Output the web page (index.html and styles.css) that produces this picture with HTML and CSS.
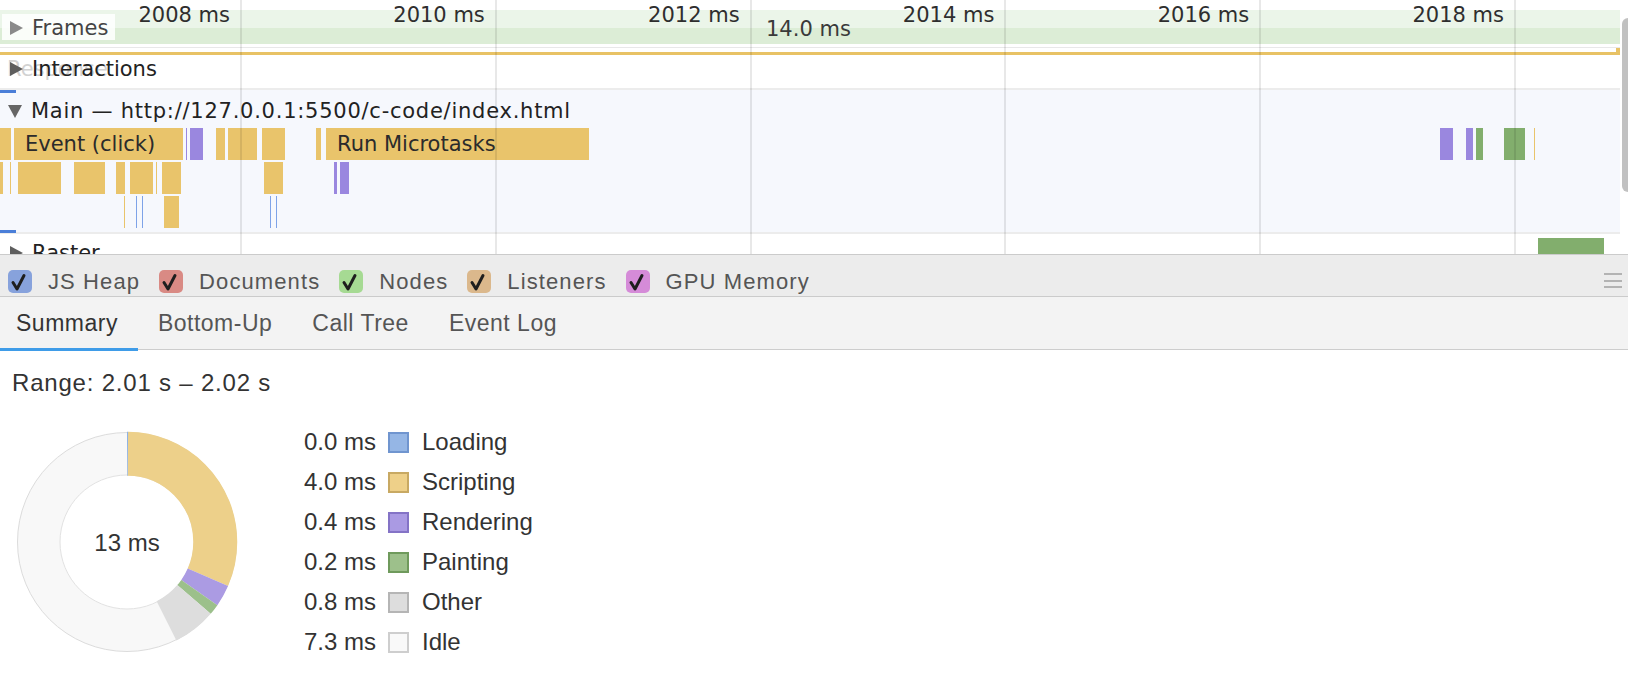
FILE: index.html
```html
<!DOCTYPE html>
<html lang="en">
<head>
<meta charset="utf-8">
<title>Performance</title>
<link rel="stylesheet" href="styles.css">
</head>
<body>
<div class="timeline">
  <div class="tracks">
    <div class="frames">
      <div class="band"><div class="band-top"></div><div class="band-bottom"></div></div>
      <div class="frame-dur">14.0 ms</div>
      <div class="frames-label"><span class="tri-right light"></span>Frames</div>
    </div>
    <div class="busy"><span class="busy-tick"></span></div>
    <div class="interactions">
      <span class="ghost">Response</span>
      <div class="track-title"><span class="tri-right"></span>Interactions</div>
    </div>
    <div class="main">
      <div class="main-title"><span class="tri-down"></span>Main — http://127.0.0.1:5500/c-code/index.html</div>
      <div class="bar-row">
        <div class="bar y" style="left:0;width:11px"></div>
        <div class="bar y" style="left:14px;width:169px"><span class="bar-text">Event (click)</span></div>
        <div class="bar p" style="left:186px;width:1px"></div>
        <div class="bar p" style="left:190px;width:13px"></div>
        <div class="bar y" style="left:216px;width:9px"></div>
        <div class="bar y" style="left:228px;width:29px"></div>
        <div class="bar y" style="left:262px;width:23px"></div>
        <div class="bar y" style="left:316px;width:5px"></div>
        <div class="bar y" style="left:326px;width:263px"><span class="bar-text">Run Microtasks</span></div>
        <div class="bar p" style="left:1440px;width:13px"></div>
        <div class="bar p" style="left:1466px;width:7px"></div>
        <div class="bar g" style="left:1476px;width:7px"></div>
        <div class="bar g" style="left:1504px;width:21px"></div>
        <div class="bar y" style="left:1534px;width:1px"></div>
      </div>
      <div class="bar-row">
        <div class="bar y" style="left:0;width:3px"></div>
        <div class="bar y" style="left:10px;width:1px"></div>
        <div class="bar y" style="left:18px;width:43px"></div>
        <div class="bar y" style="left:74px;width:31px"></div>
        <div class="bar y" style="left:116px;width:9px"></div>
        <div class="bar y" style="left:130px;width:23px"></div>
        <div class="bar y" style="left:156px;width:1px"></div>
        <div class="bar y" style="left:162px;width:19px"></div>
        <div class="bar y" style="left:264px;width:19px"></div>
        <div class="bar p" style="left:334px;width:3px"></div>
        <div class="bar p" style="left:340px;width:9px"></div>
      </div>
      <div class="bar-row last">
        <div class="bar y" style="left:124px;width:1px"></div>
        <div class="bar b" style="left:136px;width:1px"></div>
        <div class="bar b" style="left:142px;width:1px"></div>
        <div class="bar y" style="left:164px;width:15px"></div>
        <div class="bar b" style="left:270px;width:1px"></div>
        <div class="bar b" style="left:276px;width:1px"></div>
      </div>
    </div>
    <div class="raster">
      <div class="track-title raster-title"><span class="tri-right"></span>Raster</div>
      <div class="bar g raster-bar" style="left:1538px;width:66px"></div>
    </div>
  </div>

  <div class="grid-line" style="left:240px"></div>
  <div class="grid-line" style="left:494.8px"></div>
  <div class="grid-line" style="left:749.6px"></div>
  <div class="grid-line" style="left:1004.4px"></div>
  <div class="grid-line" style="left:1259.2px"></div>
  <div class="grid-line" style="left:1514px"></div>

  <div class="tick" style="left:230px">2008 ms</div>
  <div class="tick" style="left:484.8px">2010 ms</div>
  <div class="tick" style="left:739.6px">2012 ms</div>
  <div class="tick" style="left:994.4px">2014 ms</div>
  <div class="tick" style="left:1249.2px">2016 ms</div>
  <div class="tick" style="left:1504px">2018 ms</div>

  <div class="marker marker-top"></div>
  <div class="marker marker-bottom"></div>
  <div class="scroll-thumb"></div>
</div>

<div class="counters">
  <label class="counter"><span class="cb cb-heap"><svg viewBox="0 0 24 23" width="24" height="23"><polyline points="5,12.5 9,19 16,5.5" /></svg></span>JS Heap</label>
  <label class="counter"><span class="cb cb-docs"><svg viewBox="0 0 24 23" width="24" height="23"><polyline points="5,12.5 9,19 16,5.5" /></svg></span>Documents</label>
  <label class="counter"><span class="cb cb-nodes"><svg viewBox="0 0 24 23" width="24" height="23"><polyline points="5,12.5 9,19 16,5.5" /></svg></span>Nodes</label>
  <label class="counter"><span class="cb cb-list"><svg viewBox="0 0 24 23" width="24" height="23"><polyline points="5,12.5 9,19 16,5.5" /></svg></span>Listeners</label>
  <label class="counter"><span class="cb cb-gpu"><svg viewBox="0 0 24 23" width="24" height="23"><polyline points="5,12.5 9,19 16,5.5" /></svg></span>GPU Memory</label>
  <span class="menu"><i></i><i></i><i></i></span>
</div>

<div class="tabs">
  <div class="tab selected">Summary</div>
  <div class="tab">Bottom-Up</div>
  <div class="tab">Call Tree</div>
  <div class="tab">Event Log</div>
</div>

<div class="summary">
  <div class="range">Range: 2.01 s – 2.02 s</div>
  <div class="chart-row">
    <svg class="pie" width="230" height="230" viewBox="0 0 230 230">
      <circle cx="115" cy="115" r="88.25" fill="none" stroke="#f8f8f8" stroke-width="42.5"/>
      <circle cx="115" cy="115" r="109.5" fill="none" stroke="#dcdcdc" stroke-width="1"/>
      <circle cx="115" cy="115" r="67" fill="none" stroke="#e2e2e2" stroke-width="1"/>
      <g transform="rotate(-90 115 115)" fill="none" stroke-width="44">
        <circle cx="115" cy="115" r="88.25" stroke="#edd08a" stroke-dasharray="173.9 600" stroke-dashoffset="-0.8"/>
        <circle cx="115" cy="115" r="88.25" stroke="#ab9be3" stroke-dasharray="17.47 600" stroke-dashoffset="-174.67"/>
        <circle cx="115" cy="115" r="88.25" stroke="#9cc08b" stroke-dasharray="8.73 600" stroke-dashoffset="-192.14"/>
        <circle cx="115" cy="115" r="88.25" stroke="#dddddd" stroke-dasharray="34.93 600" stroke-dashoffset="-200.87"/>
        <circle cx="115" cy="115" r="88.25" stroke="#8fb2e4" stroke-dasharray="0.9 600" stroke-dashoffset="0"/>
      </g>
      <text x="115" y="123.5" text-anchor="middle" class="pie-total">13 ms</text>
    </svg>
    <div class="legend">
      <div class="legend-row"><span class="val">0.0 ms</span><span class="sw sw-loading"></span><span class="lbl">Loading</span></div>
      <div class="legend-row"><span class="val">4.0 ms</span><span class="sw sw-scripting"></span><span class="lbl">Scripting</span></div>
      <div class="legend-row"><span class="val">0.4 ms</span><span class="sw sw-rendering"></span><span class="lbl">Rendering</span></div>
      <div class="legend-row"><span class="val">0.2 ms</span><span class="sw sw-painting"></span><span class="lbl">Painting</span></div>
      <div class="legend-row"><span class="val">0.8 ms</span><span class="sw sw-other"></span><span class="lbl">Other</span></div>
      <div class="legend-row"><span class="val">7.3 ms</span><span class="sw sw-idle"></span><span class="lbl">Idle</span></div>
    </div>
  </div>
</div>
</body>
</html>
```

FILE: styles.css
```css
html, body {
  margin: 0;
  padding: 0;
}
body {
  width: 1628px;
  height: 674px;
  overflow: hidden;
  background: #ffffff;
  font-family: "Liberation Sans", Arial, sans-serif;
  color: #333;
}

/* ---------- timeline ---------- */
.timeline {
  position: relative;
  height: 254px;
  overflow: hidden;
  font-family: "DejaVu Sans", "Liberation Sans", sans-serif;
  font-size: 21px;
  color: #222;
}
.tracks {
  width: 1620px;
}
.frames {
  position: relative;
  height: 47px;
  border-bottom: 1px solid #e8e8e8;
  margin-bottom: 4px;
}
.band {
  position: absolute;
  left: 0;
  right: 0;
  top: 10px;
  height: 34px;
  display: flex;
  flex-direction: column;
}
.band-top {
  height: 18px;
  background: #ebf5e9;
}
.band-bottom {
  flex: 1;
  background: #dcedd6;
}
.frame-dur {
  position: absolute;
  left: 766px;
  top: 17px;
  line-height: 24px;
  color: #3a3a3a;
}
.frames-label {
  position: absolute;
  left: 2px;
  top: 14px;
  width: 113px;
  height: 26px;
  box-sizing: border-box;
  padding: 1px 0 0 8px;
  line-height: 24px;
  background: rgba(255, 255, 255, 0.85);
  display: flex;
  align-items: center;
  color: #444;
}
.tri-right {
  display: inline-block;
  width: 0;
  height: 0;
  border-top: 7px solid transparent;
  border-bottom: 7px solid transparent;
  border-left: 13px solid #5e5e5e;
  margin-right: 9px;
  flex: none;
}
.tri-right.light {
  border-left-color: #8a8a8a;
}
.tri-down {
  display: inline-block;
  width: 0;
  height: 0;
  border-left: 7.5px solid transparent;
  border-right: 7.5px solid transparent;
  border-top: 13px solid #666;
  margin-right: 9px;
  flex: none;
}
.busy {
  position: relative;
  height: 3px;
  background: #e8c265;
}
.busy-tick {
  position: absolute;
  right: 0;
  bottom: 0;
  width: 4px;
  height: 7px;
  background: #e8c265;
}
.interactions {
  position: relative;
  height: 33px;
  border-bottom: 2px solid #ececec;
}
.track-title {
  position: relative;
  display: flex;
  align-items: center;
  padding: 2px 0 0 10px;
  line-height: 24px;
}
.ghost {
  position: absolute;
  left: 7px;
  top: 2px;
  line-height: 24px;
  color: #d2d2d2;
}
.main {
  background: #f6f8fd;
  padding-bottom: 4px;
  border-bottom: 2px solid #ececec;
}
.main-title {
  display: flex;
  align-items: center;
  padding: 9px 0 5px 8px;
  line-height: 24px;
  letter-spacing: 0.75px;
  color: #222;
  white-space: nowrap;
}
.bar-row {
  position: relative;
  height: 32px;
  margin-bottom: 2px;
}
.bar-row.last {
  margin-bottom: 0;
}
.bar {
  position: absolute;
  top: 0;
  height: 32px;
  overflow: hidden;
  white-space: nowrap;
}
.bar.y { background: #e9c46b; }
.bar.p { background: #9a87df; }
.bar.g { background: #82ae6d; }
.bar.b { background: #7ea3e8; }
.bar-text {
  display: block;
  padding-left: 11px;
  line-height: 32px;
  color: #2b2b2b;
}
.raster {
  position: relative;
  height: 20px;
  overflow: hidden;
}
.raster-title {
  padding-top: 7px;
}
.raster-bar {
  top: 4px;
  height: 16px;
}
.grid-line {
  position: absolute;
  top: 0;
  bottom: 0;
  width: 2px;
  background: rgba(0, 0, 0, 0.09);
}
.tick {
  position: absolute;
  top: 3px;
  line-height: 24px;
  transform: translateX(-100%);
  white-space: nowrap;
  color: #2e2e2e;
}
.marker {
  position: absolute;
  left: 0;
  width: 16px;
  height: 3px;
  background: #4a7ed8;
}
.marker-top { top: 90px; }
.marker-bottom { top: 230px; }
.scroll-thumb {
  position: absolute;
  left: 1622px;
  top: 18px;
  width: 12px;
  height: 174px;
  border-radius: 6px;
  background: #c1c1c1;
}

/* ---------- counters ---------- */
.counters {
  display: flex;
  align-items: flex-start;
  height: 26px;
  padding: 15px 0 0 8px;
  background: #ececec;
  border-top: 1px solid #cbcbcb;
  border-bottom: 1px solid #cbcbcb;
  font-size: 22px;
  letter-spacing: 1.1px;
  color: #555;
}
.counter {
  display: flex;
  align-items: flex-start;
  gap: 16px;
  margin-right: 19px;
  line-height: 23px;
  white-space: nowrap;
}
.cb {
  display: block;
  width: 24px;
  height: 23px;
  border-radius: 5px;
  flex: none;
}
.cb svg {
  display: block;
}
.cb polyline {
  fill: none;
  stroke: #1e1e1e;
  stroke-width: 3;
  stroke-linecap: round;
  stroke-linejoin: round;
}
.cb-heap { background: #87a2dc; }
.cb-docs { background: #d98a84; }
.cb-nodes { background: #a6da93; }
.cb-list { background: #dbb88c; }
.cb-gpu { background: #d58bd8; }
.menu {
  margin-left: auto;
  margin-right: 6px;
  margin-top: 3px;
  width: 18px;
  display: flex;
  flex-direction: column;
  gap: 4.5px;
}
.menu i {
  display: block;
  height: 2px;
  background: #b3b3b3;
}

/* ---------- tabs ---------- */
.tabs {
  display: flex;
  height: 52px;
  background: #f3f3f3;
  border-bottom: 1px solid #cdcdcd;
  font-size: 23px;
  letter-spacing: 0.5px;
}
.tab {
  position: relative;
  padding: 0 20px;
  line-height: 52px;
  color: #555;
  white-space: nowrap;
}
.tab:first-child {
  padding-left: 16px;
}
.tab.selected {
  color: #333;
}
.tab.selected::after {
  content: "";
  position: absolute;
  left: 0;
  right: 0;
  bottom: -2px;
  height: 3px;
  background: #3f9ce8;
}

/* ---------- summary ---------- */
.summary {
  padding: 18px 0 0 12px;
}
.range {
  font-size: 24px;
  line-height: 30px;
  letter-spacing: 0.8px;
  color: #333;
  white-space: nowrap;
}
.chart-row {
  display: flex;
  align-items: flex-start;
  margin-top: 23px;
}
.pie {
  display: block;
  margin-top: 6px;
  flex: none;
}
.pie-total {
  font-family: "Liberation Sans", Arial, sans-serif;
  font-size: 24px;
  fill: #333;
}
.legend {
  margin-left: 60px;
  margin-top: 1px;
}
.legend-row {
  display: flex;
  align-items: center;
  height: 40px;
  font-size: 24px;
  color: #333;
  white-space: nowrap;
}
.val {
  flex: none;
  width: 74px;
  text-align: right;
}
.sw {
  flex: none;
  width: 21px;
  height: 21px;
  box-sizing: border-box;
  border: 2px solid;
  margin: 0 13px 0 12px;
}
.lbl {
  flex: none;
}
.sw-loading { background: #95b6e5; border-color: #7095cf; }
.sw-scripting { background: #eed089; border-color: #c8a963; }
.sw-rendering { background: #aa9ae3; border-color: #8473c6; }
.sw-painting { background: #9dc08b; border-color: #6f9a5c; }
.sw-other { background: #dddddd; border-color: #b5b5b5; }
.sw-idle { background: #f9f9f9; border-color: #cecece; }
```
